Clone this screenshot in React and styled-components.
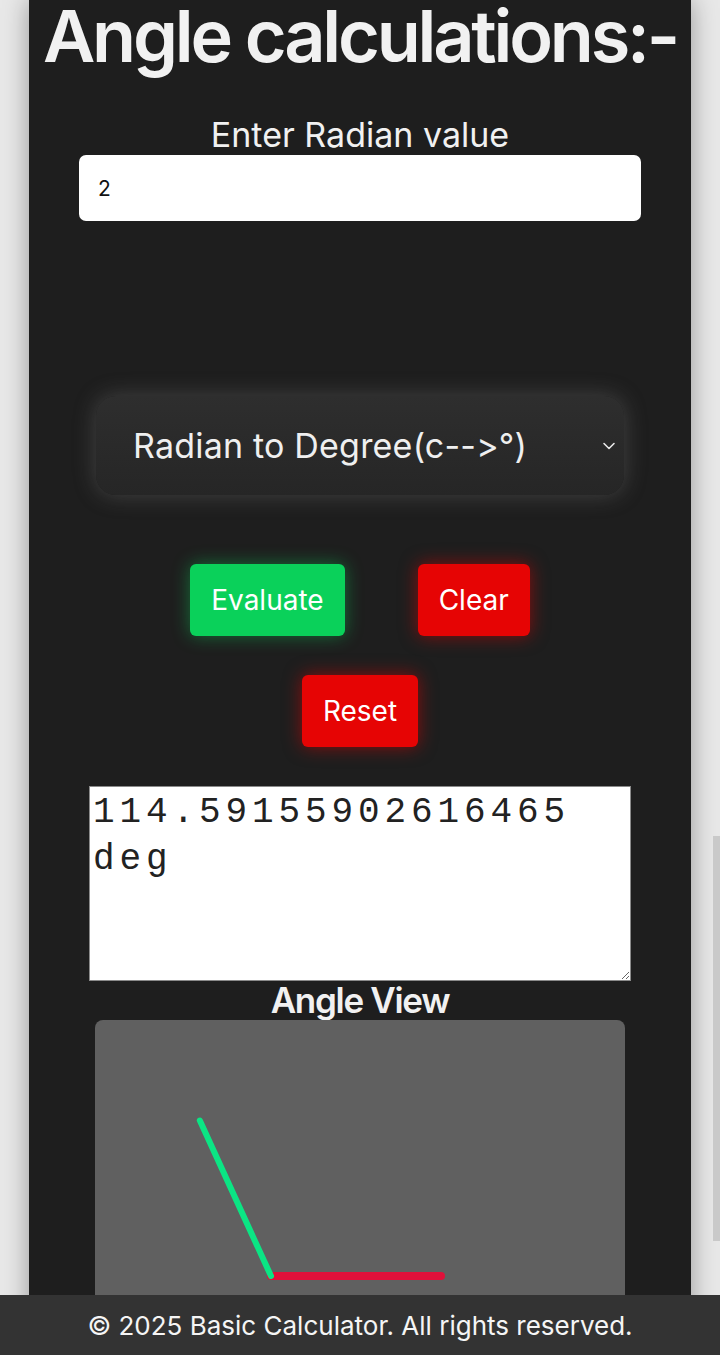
import React from "react";
import styled, { createGlobalStyle } from "styled-components";

const Global = createGlobalStyle`
  html, body { margin: 0; padding: 0; }
  body {
    background: #e8e8e8;
    font-family: Inter, "Noto Sans", sans-serif;
    font-variant-ligatures: none;
    font-feature-settings: "calt" 0, "liga" 0;
    overflow: hidden;
  }
`;

const Container = styled.main`
  width: 662px;
  margin: 0 auto;
  min-height: 1355px;
  background: #1e1e1e;
  box-shadow: 0 0 24px rgba(0, 0, 0, 0.35);
  display: flex;
  flex-direction: column;
  align-items: center;
  box-sizing: border-box;
`;

const Title = styled.h1`
  margin: -7px 0 0;
  font-family: Inter, sans-serif;
  font-weight: 600;
  font-size: 72px;
  line-height: 86px;
  letter-spacing: -3.2px;
  color: #f1f1f1;
  white-space: nowrap;
`;

const Label = styled.label`
  margin-top: 36px;
  font-size: 34px;
  line-height: 40px;
  font-weight: 400;
  color: #f1f1f1;
`;

const TextInput = styled.input`
  box-sizing: border-box;
  width: 562px;
  height: 66px;
  border: none;
  border-radius: 7px;
  background: #fff;
  padding: 0 19px;
  font-family: Inter, sans-serif;
  font-size: 21px;
  color: #111;
  outline: none;
`;

const SelectWrap = styled.div`
  margin-top: 175px;
  width: 528px;
  height: 99px;
  border-radius: 20px;
  background: linear-gradient(180deg, #2e2e2e 0%, #262626 100%);
  box-shadow: 0 0 22px rgba(130, 130, 130, 0.38);
  display: flex;
  align-items: center;
  box-sizing: border-box;
  padding: 0 37px;
`;

const SelectText = styled.span`
  font-size: 34px;
  letter-spacing: 0.2px;
  color: #efefef;
  font-weight: 400;
  flex: 1;
  white-space: nowrap;
`;

const Chevron = styled.svg`
  width: 14px;
  height: 10px;
  margin-right: -29px;
`;

const ButtonRow = styled.div`
  display: flex;
  justify-content: center;
  gap: 73px;
  margin-top: 69px;
`;

const Btn = styled.button`
  height: 72px;
  padding: 0 21px;
  border: none;
  border-radius: 6px;
  font-family: Inter, sans-serif;
  font-size: 28px;
  font-weight: 400;
  color: #fff;
  background: ${(p) => (p.$kind === "go" ? "#0ad15a" : "#e60404")};
  box-shadow: 0 0 18px
    ${(p) => (p.$kind === "go" ? "rgba(10, 209, 90, 0.45)" : "rgba(230, 4, 4, 0.55)")};
`;

const ResetRow = styled.div`
  margin-top: 39px;
  display: flex;
  justify-content: center;
`;

const Output = styled.textarea`
  box-sizing: border-box;
  margin-top: 39px;
  width: 542px;
  height: 195px;
  border: 1px solid #8a8a8a;
  background: #fff;
  padding: 2px 3px;
  font-family: "Liberation Mono", monospace;
  font-size: 36px;
  line-height: 47px;
  letter-spacing: 4.9px;
  color: #222;
  resize: vertical;
  outline: none;
`;

const ViewTitle = styled.h2`
  margin: 0;
  font-family: Inter, sans-serif;
  font-weight: 600;
  font-size: 35px;
  line-height: 39px;
  letter-spacing: -1.3px;
  color: #f1f1f1;
`;

const Canvas = styled.div`
  width: 530px;
  height: 300px;
  border-radius: 8px;
  background: #606060;
  overflow: hidden;
`;

const Footer = styled.footer`
  position: fixed;
  left: 0;
  right: 0;
  bottom: 0;
  height: 60px;
  background: #333333;
  color: #f5f5f5;
  display: flex;
  align-items: center;
  justify-content: center;
  font-size: 26px;
`;

const ScrollThumb = styled.div`
  position: fixed;
  right: 0;
  top: 836px;
  width: 7px;
  height: 405px;
  background: #c9c9c9;
`;

export default function App() {
  const deg = 114.59155902616465;
  const rad = (deg * Math.PI) / 180;
  const ox = 176;
  const oy = 256;
  const gLen = 171;
  const rLen = 170;
  const gx = ox + gLen * Math.cos(rad);
  const gy = oy - gLen * Math.sin(rad);
  return (
    <>
      <Global />
      <Container>
        <Title>Angle calculations:-</Title>
        <Label htmlFor="rad">Enter Radian value</Label>
        <TextInput id="rad" defaultValue="2" />
        <SelectWrap>
          <SelectText>Radian to Degree(c--&gt;°)</SelectText>
          <Chevron viewBox="0 0 14 10">
            <path d="M2 2.5 L7 7.5 L12 2.5" fill="none" stroke="#e8e8e8" strokeWidth="1.6" strokeLinecap="round" strokeLinejoin="round" />
          </Chevron>
        </SelectWrap>
        <ButtonRow>
          <Btn $kind="go">Evaluate</Btn>
          <Btn $kind="stop">Clear</Btn>
        </ButtonRow>
        <ResetRow>
          <Btn $kind="stop">Reset</Btn>
        </ResetRow>
        <Output readOnly value={"114.59155902616465 deg"} />
        <ViewTitle>Angle View</ViewTitle>
        <Canvas>
          <svg width="530" height="300" viewBox="0 0 530 300">
            <line x1={ox} y1={oy} x2={ox + rLen} y2={oy} stroke="#e0103a" strokeWidth="8" strokeLinecap="round" />
            <line x1={ox} y1={oy} x2={gx} y2={gy} stroke="#0be584" strokeWidth="6" strokeLinecap="round" />
          </svg>
        </Canvas>
      </Container>
      <ScrollThumb />
      <Footer>© 2025 Basic Calculator. All rights reserved.</Footer>
    </>
  );
}
